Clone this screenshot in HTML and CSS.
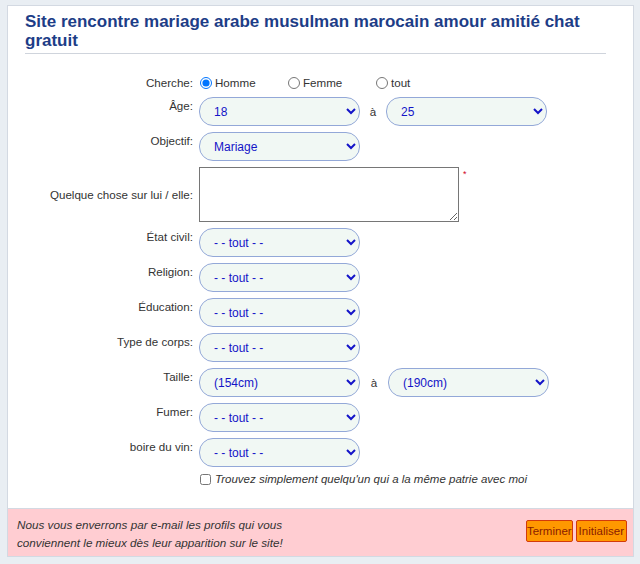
FILE: index.html
```html
<!DOCTYPE html>
<html lang="fr">
  <head>
    <meta charset="utf-8" />
    <title>Recherche</title>
    <link rel="stylesheet" href="styles.css">
  </head>
  <body>
    <div class="box">
      <div class="box-body">
        <h1 class="box-title">Site rencontre mariage arabe musulman marocain amour amitié chat gratuit</h1>

        <form class="search-form">
          <label class="field-label">Cherche:</label>
          <div class="field radios">
            <label class="radio-opt"><input type="radio" name="sexe" checked> Homme</label>
            <label class="radio-opt"><input type="radio" name="sexe"> Femme</label>
            <label class="radio-opt"><input type="radio" name="sexe"> tout</label>
          </div>

          <label class="field-label">Âge:</label>
          <div class="field">
            <select class="sel"><option>18</option></select>
            <span class="to">à</span>
            <select class="sel"><option>25</option></select>
          </div>

          <label class="field-label">Objectif:</label>
          <div class="field">
            <select class="sel"><option>Mariage</option></select>
          </div>

          <label class="field-label middle">Quelque chose sur lui / elle:</label>
          <div class="field">
            <textarea class="about"></textarea>
            <span class="req">*</span>
          </div>

          <label class="field-label">État civil:</label>
          <div class="field"><select class="sel"><option>- - tout - -</option></select></div>

          <label class="field-label">Religion:</label>
          <div class="field"><select class="sel"><option>- - tout - -</option></select></div>

          <label class="field-label">Éducation:</label>
          <div class="field"><select class="sel"><option>- - tout - -</option></select></div>

          <label class="field-label">Type de corps:</label>
          <div class="field"><select class="sel"><option>- - tout - -</option></select></div>

          <label class="field-label">Taille:</label>
          <div class="field">
            <select class="sel"><option>(154cm)</option></select>
            <span class="to wide">à</span>
            <select class="sel"><option>(190cm)</option></select>
          </div>

          <label class="field-label">Fumer:</label>
          <div class="field"><select class="sel"><option>- - tout - -</option></select></div>

          <label class="field-label">boire du vin:</label>
          <div class="field"><select class="sel"><option>- - tout - -</option></select></div>

          <span></span>
          <label class="field check"><input type="checkbox"> Trouvez simplement quelqu'un qui a la même patrie avec moi</label>
        </form>
      </div>

      <div class="box-footer">
        <p class="note">Nous vous enverrons par e-mail les profils qui vous<br>conviennent le mieux dès leur apparition sur le site!</p>
        <div class="actions">
          <button type="button" class="btn">Terminer</button>
          <button type="button" class="btn">Initialiser</button>
        </div>
      </div>
    </div>
  </body>
</html>
```

FILE: styles.css
```css
/* page + panel */
body {
  margin: 0;
  padding: 5px 6px 7px 7px;
  background-color: #e9eef3;
  font-family: "Liberation Sans", Arial, sans-serif;
  font-size: 11.6px;
  color: #333333;
}

.box {
  background-color: #ffffff;
  border: 1px solid #d3d9e2;
}

.box-body {
  padding: 6px 27px 23px 17px;
}

.box-title {
  margin: 0;
  padding-bottom: 3px;
  border-bottom: 1px solid #cfd4dc;
  font-size: 17px;
  line-height: 19px;
  font-weight: bold;
  color: #1d3d87;
}

/* search form */
.search-form {
  display: grid;
  grid-template-columns: 168px 1fr;
  column-gap: 6px;
  row-gap: 6px;
  margin-top: 20px;
}

.field-label {
  text-align: right;
  padding-top: 1px;
  line-height: 15px;
}

.field-label.middle {
  align-self: center;
  padding-top: 0;
}

.field {
  display: flex;
  align-items: center;
}

.radios {
  height: 17px;
}

.radio-opt {
  width: 88px;
  display: flex;
  align-items: center;
  gap: 2px;
}

.radio-opt input {
  margin: 0 1px;
  width: 12px;
  height: 12px;
}

.sel {
  width: 161px;
  height: 29px;
  padding: 0 6px 0 10px;
  border: 1px solid #93a8d8;
  border-radius: 14px;
  background-color: #f1f8f4;
  color: #1414c8;
  font-family: "Liberation Sans", Arial, sans-serif;
  font-size: 12px;
}

.to {
  width: 26px;
  text-align: center;
}

.to.wide {
  width: 28px;
}

.about {
  width: 260px;
  height: 55px;
  box-sizing: border-box;
  margin: 0;
  border: 1px solid #767676;
  resize: both;
}

.req {
  align-self: flex-start;
  margin: 2px 0 0 4px;
  color: #d0021b;
  font-size: 9px;
}

.check {
  font-style: italic;
  font-size: 11.5px;
  gap: 4px;
}

.check input {
  margin: 0 0 0 1px;
  width: 11px;
  height: 11px;
}

/* footer strip */
.box-footer {
  display: flex;
  align-items: flex-start;
  justify-content: space-between;
  padding: 7px 6px 4px 9px;
  background-color: #ffcdd2;
  border-top: 1px solid #d3d9e2;
}

.note {
  margin: 0;
  font-size: 11.7px;
  line-height: 18px;
  font-style: italic;
  color: #333333;
}

.actions {
  display: flex;
  gap: 3px;
  margin-top: 4px;
}

.btn {
  height: 22px;
  padding: 0;
  border: 1px solid #d33a0a;
  border-radius: 2px;
  background-color: #ff9800;
  color: #8a1c00;
  font-family: "Liberation Sans", Arial, sans-serif;
  font-size: 11.5px;
}

.btn + .btn {
  padding: 0 2px;
}
```
